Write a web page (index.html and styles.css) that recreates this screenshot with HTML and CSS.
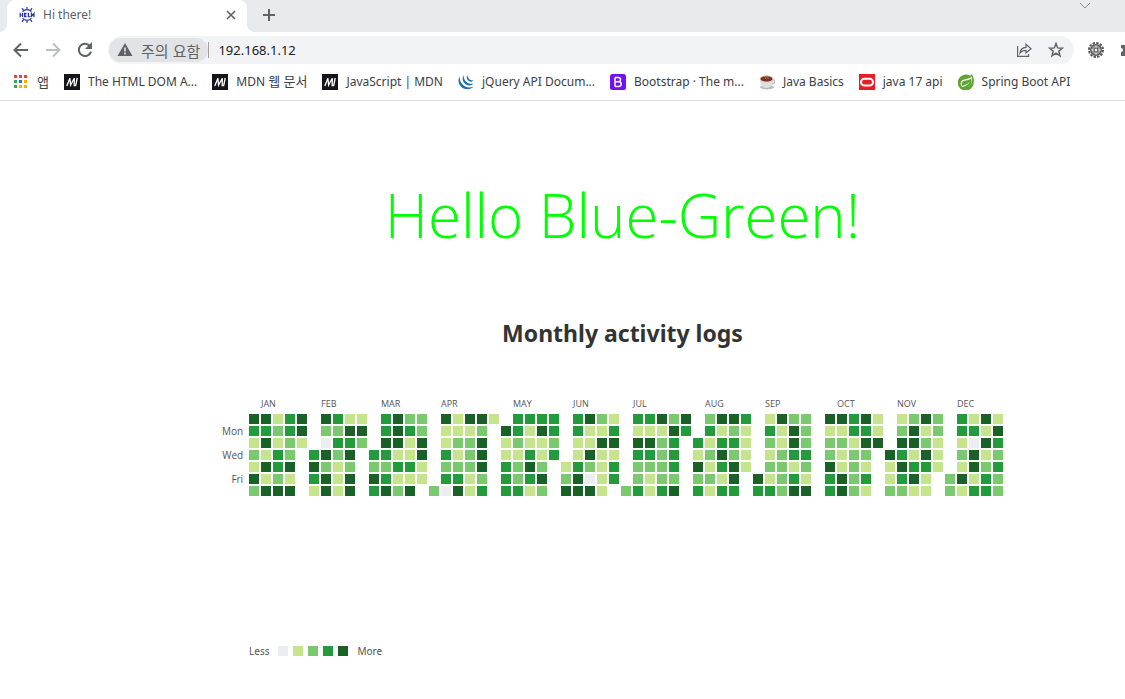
FILE: index.html
```html
<!DOCTYPE html>
<html lang="ko">
<head>
<meta charset="utf-8">
<title>Hi there!</title>
<link rel="stylesheet" href="styles.css">
</head>
<body>
<header class="browser">
  <div class="tabstrip">
    <div class="tab">
      <svg class="icon16" viewBox="0 0 16 16" fill="none" stroke="#2d3596" stroke-width="1.2">
        <path d="M3.6 4.6a6 6 0 0 1 8.8 0M3.6 11.4a6 6 0 0 0 8.8 0M8 2.7V0M4.6 3.6 3 1.2M11.4 3.6 13 1.2M8 13.3V16M4.6 12.4 3 14.8M11.4 12.4 13 14.8"/>
        <path d="M1.2 5.8v4.4M3.6 5.8v4.4M1.2 8h2.4M7.6 6.4H5.6v3.2h2M5.6 8h1.8M9.4 5.8v3.8h1.8M12.4 10.2V6.4l1.3 2 1.3-2v3.8"/>
      </svg>
      <span class="tab-title">Hi there!</span>
      <button class="plain" aria-label="Close tab">
        <svg class="icon10" viewBox="0 0 10 10" fill="none" stroke="#5f6368" stroke-width="1.6"><path d="m1 1 8 8M9 1 1 9"/></svg>
      </button>
    </div>
    <button class="plain new-tab" aria-label="New tab">
      <svg class="icon12" viewBox="0 0 12 12" fill="none" stroke="#5f6368" stroke-width="2"><path d="M6 0v12M0 6h12"/></svg>
    </button>
    <button class="plain tab-search" aria-label="Search tabs">
      <svg class="icon12" viewBox="0 0 12 12" fill="none" stroke="#8a8d91" stroke-width="1"><path d="m1 3 5 5 5-5"/></svg>
    </button>
  </div>
  <div class="toolbar">
    <button class="plain" aria-label="Back"><svg class="icon16" viewBox="0 0 16 16" fill="none" stroke="#5f6368" stroke-width="2"><path d="M15 8H2M8 1.5 1.5 8 8 14.5"/></svg></button>
    <button class="plain" aria-label="Forward"><svg class="icon16" viewBox="0 0 16 16" fill="none" stroke="#bdbfc1" stroke-width="2"><path d="M1 8h13M8 1.5 14.5 8 8 14.5"/></svg></button>
    <button class="plain" aria-label="Reload"><svg class="icon16" viewBox="0 0 16 16"><path d="M13.2 4.4A6.2 6.2 0 1 0 14 9.6" fill="none" stroke="#5f6368" stroke-width="2"/><path d="M15 0v7H8z" fill="#5f6368"/></svg></button>
    <div class="omnibox">
      <button class="security">
        <svg class="icon16" viewBox="0 0 16 16"><path d="M8 1 15.5 14H.5z" fill="#5f6368"/><path d="M8 5.5v4M8 10.6v1.8" stroke="#e1e3e5" stroke-width="1.6"/></svg>
        <span>주의 요함</span>
      </button>
      <input class="address" type="text" aria-label="Address" value="192.168.1.12">
      <button class="plain" aria-label="Share"><svg class="icon16" viewBox="0 0 16 16" fill="none" stroke="#5f6368" stroke-width="1.2"><path d="M1.6 4v10.400h11V12M4 11c.4-3.600 2.600-5.400 6-5.600V2.400l5 4.400-5 4.200V8.400C7.400 8.400 5.500 9 4 11z"/></svg></button>
      <button class="plain" aria-label="Bookmark"><svg class="icon16" viewBox="0 0 16 16" fill="none" stroke="#5f6368" stroke-width="1.5"><path d="m8 1.500 1.700 4.400 4.700.3-3.600 3 1.200 4.600L8 11.200l-4 2.600 1.200-4.600-3.600-3 4.700-.3z"/></svg></button>
    </div>
    <button class="plain" aria-label="Settings extension">
      <svg class="icon16" viewBox="0 0 16 16"><circle cx="8" cy="8" r="7" fill="none" stroke="#555" stroke-width="2" stroke-dasharray="2.400 1.270"/><circle cx="8" cy="8" r="5.300" fill="#999" stroke="#555" stroke-width="1.400"/><path d="M8 3.500v3M8 9.500v3M3.500 8h3M9.500 8h3" stroke="#ddd" stroke-width="1.500"/><circle cx="8" cy="8" r="2" fill="#eee" stroke="#444"/></svg>
    </button>
    <button class="plain puzzle" aria-label="Extensions">
      <svg class="icon16" viewBox="0 0 16 16"><path d="M1 3h4a2 2 0 0 1 4 0h4v4a2 2 0 0 1 0 4v3H1v-4a2 2 0 0 0 0-4z" fill="#5f6368"/></svg>
    </button>
  </div>
  <nav class="bookmarks" aria-label="Bookmarks">
    <a href="#apps"><svg class="icon16" viewBox="0 0 16 16"><path d="M1 1h3v3H1zM6 1h3v3H6zM11 1h3v3h-3z" fill="#ea4335"/><path d="M1 6h3v3H1zM1 11h3v3H1z" fill="#34a853"/><path d="M6 6h3v3H6z" fill="#1a73e8"/><path d="M11 6h3v3h-3zM6 11h3v3H6zM11 11h3v3h-3z" fill="#fbab04"/></svg><span class="korean">앱</span></a>
    <a href="#dom"><svg class="icon16" viewBox="0 0 16 16"><path d="M0 0h16v16H0z" fill="#15141a"/><path d="M2.800 12 5.900 4.200 6.600 11l3.700-6.800-.1 7.300h1.500l1.500-7.500" fill="none" stroke="#fff" stroke-width="1.300"/></svg>The HTML DOM A...</a>
    <a href="#mdn"><svg class="icon16" viewBox="0 0 16 16"><path d="M0 0h16v16H0z" fill="#15141a"/><path d="M2.800 12 5.900 4.200 6.600 11l3.700-6.800-.1 7.300h1.500l1.500-7.500" fill="none" stroke="#fff" stroke-width="1.300"/></svg><span>MDN <span class="korean">웹 문서</span></span></a>
    <a href="#js"><svg class="icon16" viewBox="0 0 16 16"><path d="M0 0h16v16H0z" fill="#15141a"/><path d="M2.800 12 5.900 4.200 6.600 11l3.700-6.800-.1 7.300h1.500l1.500-7.500" fill="none" stroke="#fff" stroke-width="1.300"/></svg>JavaScript | MDN</a>
    <a href="#jquery"><svg class="icon16" viewBox="0 0 16 16" fill="#2270ae"><path d="M1.700 2C-1.500 7.500 2 15 9.500 15.200c2.500 0 4.500-1 6-2.700C9 15.500 1 11 1.700 2z"/><path d="M5.500 1C3 5.500 6 11.500 11.500 11.500c1.700 0 3-.7 4-2C11 11 5.500 7.500 5.500 1z"/><path d="M9.400.8C7.500 4 10 7.800 13 7.800c1.200 0 2-.6 2.600-1.500C12.500 7 9.500 4.500 9.400.8z"/></svg>jQuery API Docum...</a>
    <a href="#bootstrap"><svg class="icon16" viewBox="0 0 16 16"><rect width="16" height="16" rx="2.500" fill="#7310f5"/><path d="M5 3.500v9M5 3.500h3.300c3 0 3 4.200 0 4.200H5h3.800c3.200 0 3.200 4.800 0 4.800H5" fill="none" stroke="#fff" stroke-width="1.500"/></svg>Bootstrap · The m...</a>
    <a href="#java"><svg class="icon16" viewBox="0 0 16 16"><ellipse cx="8" cy="13.300" rx="7" ry="2.200" fill="#bbb"/><path d="M13 6c4-1 4 4-1 4" fill="none" stroke="#bbb" stroke-width="1.400"/><path d="M.8 5c0 5 2.200 9 6.700 9s6.700-4 6.700-9z" fill="#dedede"/><ellipse cx="7.500" cy="4.800" rx="6.700" ry="3.400" fill="#c9c1bb"/><ellipse cx="7.500" cy="4.900" rx="5.900" ry="2.700" fill="#7c3219"/><path d="M5 2c2 1 1 2 2 3M8 1c-1 2 2 2 1 4" fill="none" stroke="#c69b82" stroke-width=".8"/></svg>Java Basics</a>
    <a href="#java17"><svg class="icon16" viewBox="0 0 16 16"><path d="M0 0h16v16H0z" fill="#ea1b22"/><rect x="2" y="4.800" width="12" height="6.800" rx="3.400" fill="none" stroke="#fff" stroke-width="2"/></svg>java 17 api</a>
    <a href="#spring"><svg class="icon16" viewBox="0 0 16 16"><path d="M13.800 0c1.900 3 2.500 6.500 1.900 9A8 8 0 1 1 12 1.800c.8-.4 1.300-1 1.800-1.800z" fill="#5fa534"/><path d="M13.800 2.500C11 6 3 4 2.600 9.500c0 1.500.7 2.700 1.600 3.400 4.300.8 9.600-1.200 9.900-5.900.1-1.300 0-3-.3-4.500z" fill="#fff"/><path d="M13.300 4.200C11 7.200 4.500 5.500 3.700 9.300c-.2 1.200.2 2 .7 2.600C7 10.700 10.500 10 12.300 7.500 10.500 10.800 7.500 12 4.500 13c4.200 1 8.800-.7 9.200-5.200z" fill="#5fa534"/></svg>Spring Boot API</a>
  </nav>
</header>
<main class="page">
  <h1 class="hello">Hello Blue-Green!</h1>
  <h2 class="subtitle">Monthly activity logs</h2>
  <section class="chart" aria-label="Monthly activity">
    <div class="days"><span>Mon</span><span>Wed</span><span>Fri</span></div>
    <div class="months" id="months"></div>
    <div class="cells" id="cells"></div>
    <div class="legend">
      <span>Less</span>
      <div class="swatches"><i class="cell level0"></i><i class="cell level1"></i><i class="cell level2"></i><i class="cell level3"></i><i class="cell level4"></i></div>
      <span>More</span>
    </div>
  </section>
</main>
<script src="chart.js"></script>
</body>
</html>
```
FILE: styles.css
```css
* { box-sizing: border-box; }
body {
  margin: 0;
  background: #fff;
  color: #3c4043;
  font-family: "Open Sans", "Noto Sans CJK KR", sans-serif;
}
.plain { display: flex; align-items: center; justify-content: center; flex: none; padding: 0; border: 0; background: none; }
.icon16 { display: block; flex: none; width: 16px; height: 16px; }
.icon12 { display: block; width: 12px; height: 12px; }
.icon10 { display: block; width: 10px; height: 10px; }

.browser {
  border-bottom: 1px solid #dadce0;
  overflow: hidden;
  font-family: "Noto Sans", "Noto Sans CJK KR", sans-serif;
}
.tabstrip { display: flex; height: 32px; padding-left: 7px; background: #e8eaed; }
.tab {
  position: relative;
  display: flex;
  align-items: center;
  width: 240px;
  padding: 0 11px 2px 12px;
  border-radius: 8px 8px 0 0;
  background: #fff;
}
.tab::before, .tab::after { content: ""; position: absolute; bottom: 0; width: 8px; height: 8px; }
.tab::before { right: 100%; background: radial-gradient(circle at 0 0, #e8eaed 8px, #fff 8px); }
.tab::after { left: 100%; background: radial-gradient(circle at 100% 0, #e8eaed 8px, #fff 8px); }
.tab-title { flex: 1; margin-left: 8px; color: #5f6368; font-size: 12px; line-height: 16px; }
.new-tab { width: 44px; padding-bottom: 2px; }
.tab-search { align-items: flex-start; width: 24px; margin-left: auto; margin-right: 28px; }

.toolbar { display: flex; align-items: center; gap: 16px; height: 36px; padding-left: 13px; }
.omnibox {
  display: flex;
  align-items: center;
  flex: 1;
  gap: 16px;
  height: 28px;
  margin: 0 -2px 0 -1px;
  padding: 0 10px 0 1px;
  border-radius: 14px;
  background: #f1f3f4;
}
.security {
  display: flex;
  align-items: center;
  gap: 8px;
  height: 24px;
  padding: 0 8px;
  border: 0;
  border-radius: 12px;
  background: #e1e3e5;
  color: #5f6368;
  font: 15px "Noto Sans CJK KR", sans-serif;
  white-space: nowrap;
}
.address {
  flex: 1;
  min-width: 0;
  height: 16px;
  margin-left: -16px;
  padding: 0 0 0 9px;
  border: 0;
  border-left: 1px solid #9aa0a6;
  background: none;
  color: #202124;
  font: 13px "Noto Sans", sans-serif;
}
.puzzle { width: 5px; justify-content: flex-start; overflow: hidden; }
.bookmarks { display: flex; gap: 15px; height: 32px; padding: 0 0 5px 13px; }
.bookmarks a {
  display: flex;
  align-items: center;
  gap: 8px;
  color: #3c4043;
  font-size: 12px;
  line-height: 16px;
  text-decoration: none;
  white-space: nowrap;
}
.korean { font-size: 13px; }

.page { display: flex; flex-direction: column; align-items: center; padding: 72px 0 32px 120px; }
.hello { margin: 0; color: #0f0; font-size: 60px; font-weight: 300; line-height: 84px; }
.subtitle { margin: 60px 0 0; color: #333; font-family: "Noto Sans", sans-serif; font-size: 23px; font-weight: 700; line-height: 32px; }
.chart {
  display: grid;
  grid-template-columns: 21px auto;
  column-gap: 6px;
  margin-top: 49px;
  padding-right: 20px;
  color: #555;
  font-size: 10px;
  line-height: 12px;
}
.months, .cells { display: grid; grid-template-columns: repeat(63, 10px); column-gap: 2px; }
.months { grid-column: 2; height: 16px; font-size: 9px; white-space: nowrap; }
.days { grid-row: 2; display: grid; row-gap: 12px; align-content: start; padding-top: 11px; text-align: right; }
.cells { grid-column: 2; grid-row: 2; row-gap: 2px; }
.cell { width: 10px; height: 10px; }
.level0 { background: #ebedf0; }
.level1 { background: #c6e48b; }
.level2 { background: #7bc96f; }
.level3 { background: #239a3b; }
.level4 { background: #196127; }
.legend { grid-column: 2; display: flex; align-items: center; gap: 9px; margin-top: 149px; font-size: 11px; font-family: "Noto Sans", sans-serif; }
.legend { font-size: 10px; }
.swatches { display: flex; gap: 5px; }
```
FILE: chart.js
```js
const months = [
  ["JAN", 1], ["FEB", 6], ["MAR", 11], ["APR", 16], ["MAY", 22], ["JUN", 27],
  ["JUL", 32], ["AUG", 38], ["SEP", 43], ["OCT", 49], ["NOV", 54], ["DEC", 59]
];
// One string per weekday; each digit is an activity level and a hyphen is an empty day.
const rows = [
  "44134 -4311 -3422 -41441 -3333 -3421 -33424 -2443 -1422 - 44341 -1242 -3141",
  "33234 -2244 -3432 -1112- 43143 -3113 -11143 -3121 -3142 - 11331 -2412 -3314",
  "14121 -0332 -4414 -1224- 12112 -1144 -4423- 31331 -2142 - 22144 -4421 -1043",
  "2132- 3424- 33114 -3124- 11313 -1411 -3323- 12421 -1233 - 2122- 43141 -2412",
  "1434- 4212- 22331 -2224- 3242- 13213 -2223- 41341 -2212 - 4121- 14331 -1423",
  "4121- 3414- 43111 -3312- 3234- 24013 -2122- 2214- 41231 - 3423- 1341- 24132",
  "2444- 1414- 3424- 20413- 3312- 4441- 23134- 3133- 33244 - 3421- 2211- 21332"
];

const monthRow = document.getElementById("months");
for (const [name, column] of months) {
  const label = document.createElement("span");
  label.textContent = name;
  label.style.gridColumn = `${column + 1} / span 4`;
  label.style.gridRow = "1";
  monthRow.append(label);
}

const grid = document.getElementById("cells");
for (const row of rows) {
  for (const level of row.replace(/ /g, "")) {
    const cell = document.createElement("i");
    cell.className = level === "-" ? "cell" : `cell level${level}`;
    grid.append(cell);
  }
}
```
